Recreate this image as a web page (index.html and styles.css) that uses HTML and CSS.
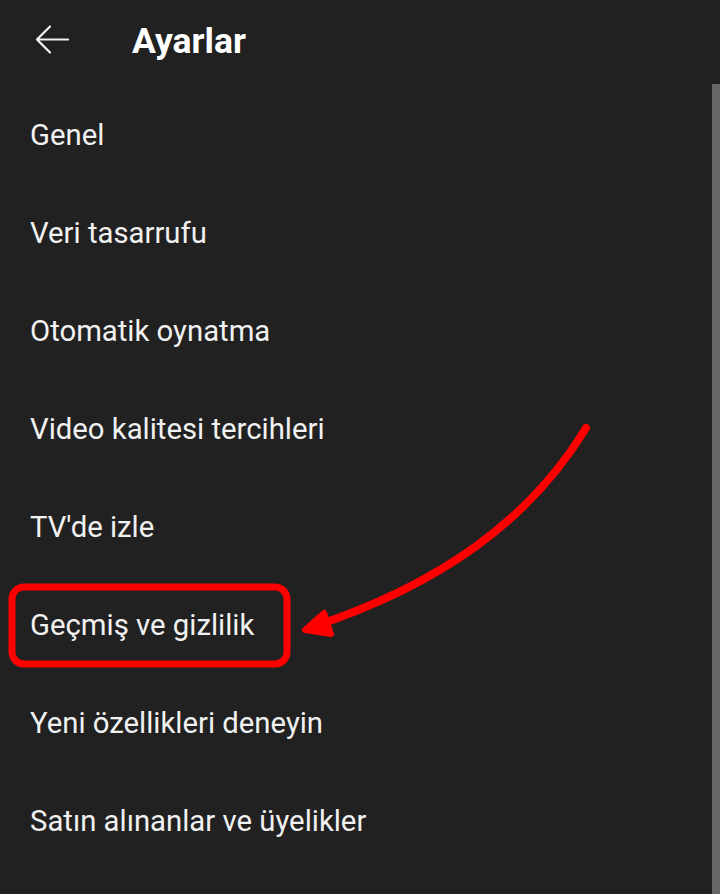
FILE: index.html
```html
<!DOCTYPE html>
<html lang="tr">
<head>
<meta charset="utf-8">
<title>Ayarlar</title>
<link rel="stylesheet" href="styles.css">
</head>
<body>
<div class="screen">
  <header class="topbar">
    <svg class="back" width="34" height="30" viewBox="0 0 34 30">
      <path d="M33 14.5H2M15 1.5L2 14.5L15 27.5" fill="none" stroke="#f1f1f1" stroke-width="2.2" stroke-linecap="round" stroke-linejoin="round"/>
    </svg>
    <h1 class="title">Ayarlar</h1>
  </header>
  <ul class="list">
    <li class="item">Genel</li>
    <li class="item">Veri tasarrufu</li>
    <li class="item">Otomatik oynatma</li>
    <li class="item">Video kalitesi tercihleri</li>
    <li class="item">TV'de izle</li>
    <li class="item">Geçmiş ve gizlilik</li>
    <li class="item">Yeni özellikleri deneyin</li>
    <li class="item">Satın alınanlar ve üyelikler</li>
  </ul>
  <div class="scrollbar"></div>
  <svg class="annot" width="720" height="894" viewBox="0 0 720 894">
    <rect x="12" y="587" width="275" height="77" rx="12" ry="12" fill="none" stroke="#ff0000" stroke-width="7"/>
    <path d="M586 428 C530 520 440 585 312 627" fill="none" stroke="#ff0000" stroke-width="8" stroke-linecap="round"/>
    <polygon points="305,630 324,613 331,634" fill="#ff0000" stroke="#ff0000" stroke-width="6" stroke-linejoin="round"/>
  </svg>
</div>
</body>
</html>
```
FILE: styles.css
```css
html, body {
  margin: 0;
  padding: 0;
  background: #212121;
}
.screen {
  position: relative;
  width: 720px;
  height: 894px;
  overflow: hidden;
  background: #212121;
  font-family: Roboto, "Noto Sans", sans-serif;
  color: #f1f1f1;
}
.topbar {
  height: 86px;
  display: flex;
  align-items: center;
  padding-left: 35px;
  box-sizing: border-box;
}
.back {
  display: block;
  margin-top: -6px;
}
.title {
  margin: -4px 0 0 63px;
  font-size: 35.5px;
  font-weight: 700;
  color: #ffffff;
}
.list {
  list-style: none;
  margin: 0;
  padding: 0;
}
.item {
  height: 98px;
  display: flex;
  align-items: center;
  padding-left: 30px;
  font-size: 29.3px;
  font-weight: 400;
}
.scrollbar {
  position: absolute;
  left: 712px;
  top: 84px;
  width: 8px;
  bottom: 0;
  background: #676767;
}
.annot {
  position: absolute;
  left: 0;
  top: 0;
  pointer-events: none;
}
```
